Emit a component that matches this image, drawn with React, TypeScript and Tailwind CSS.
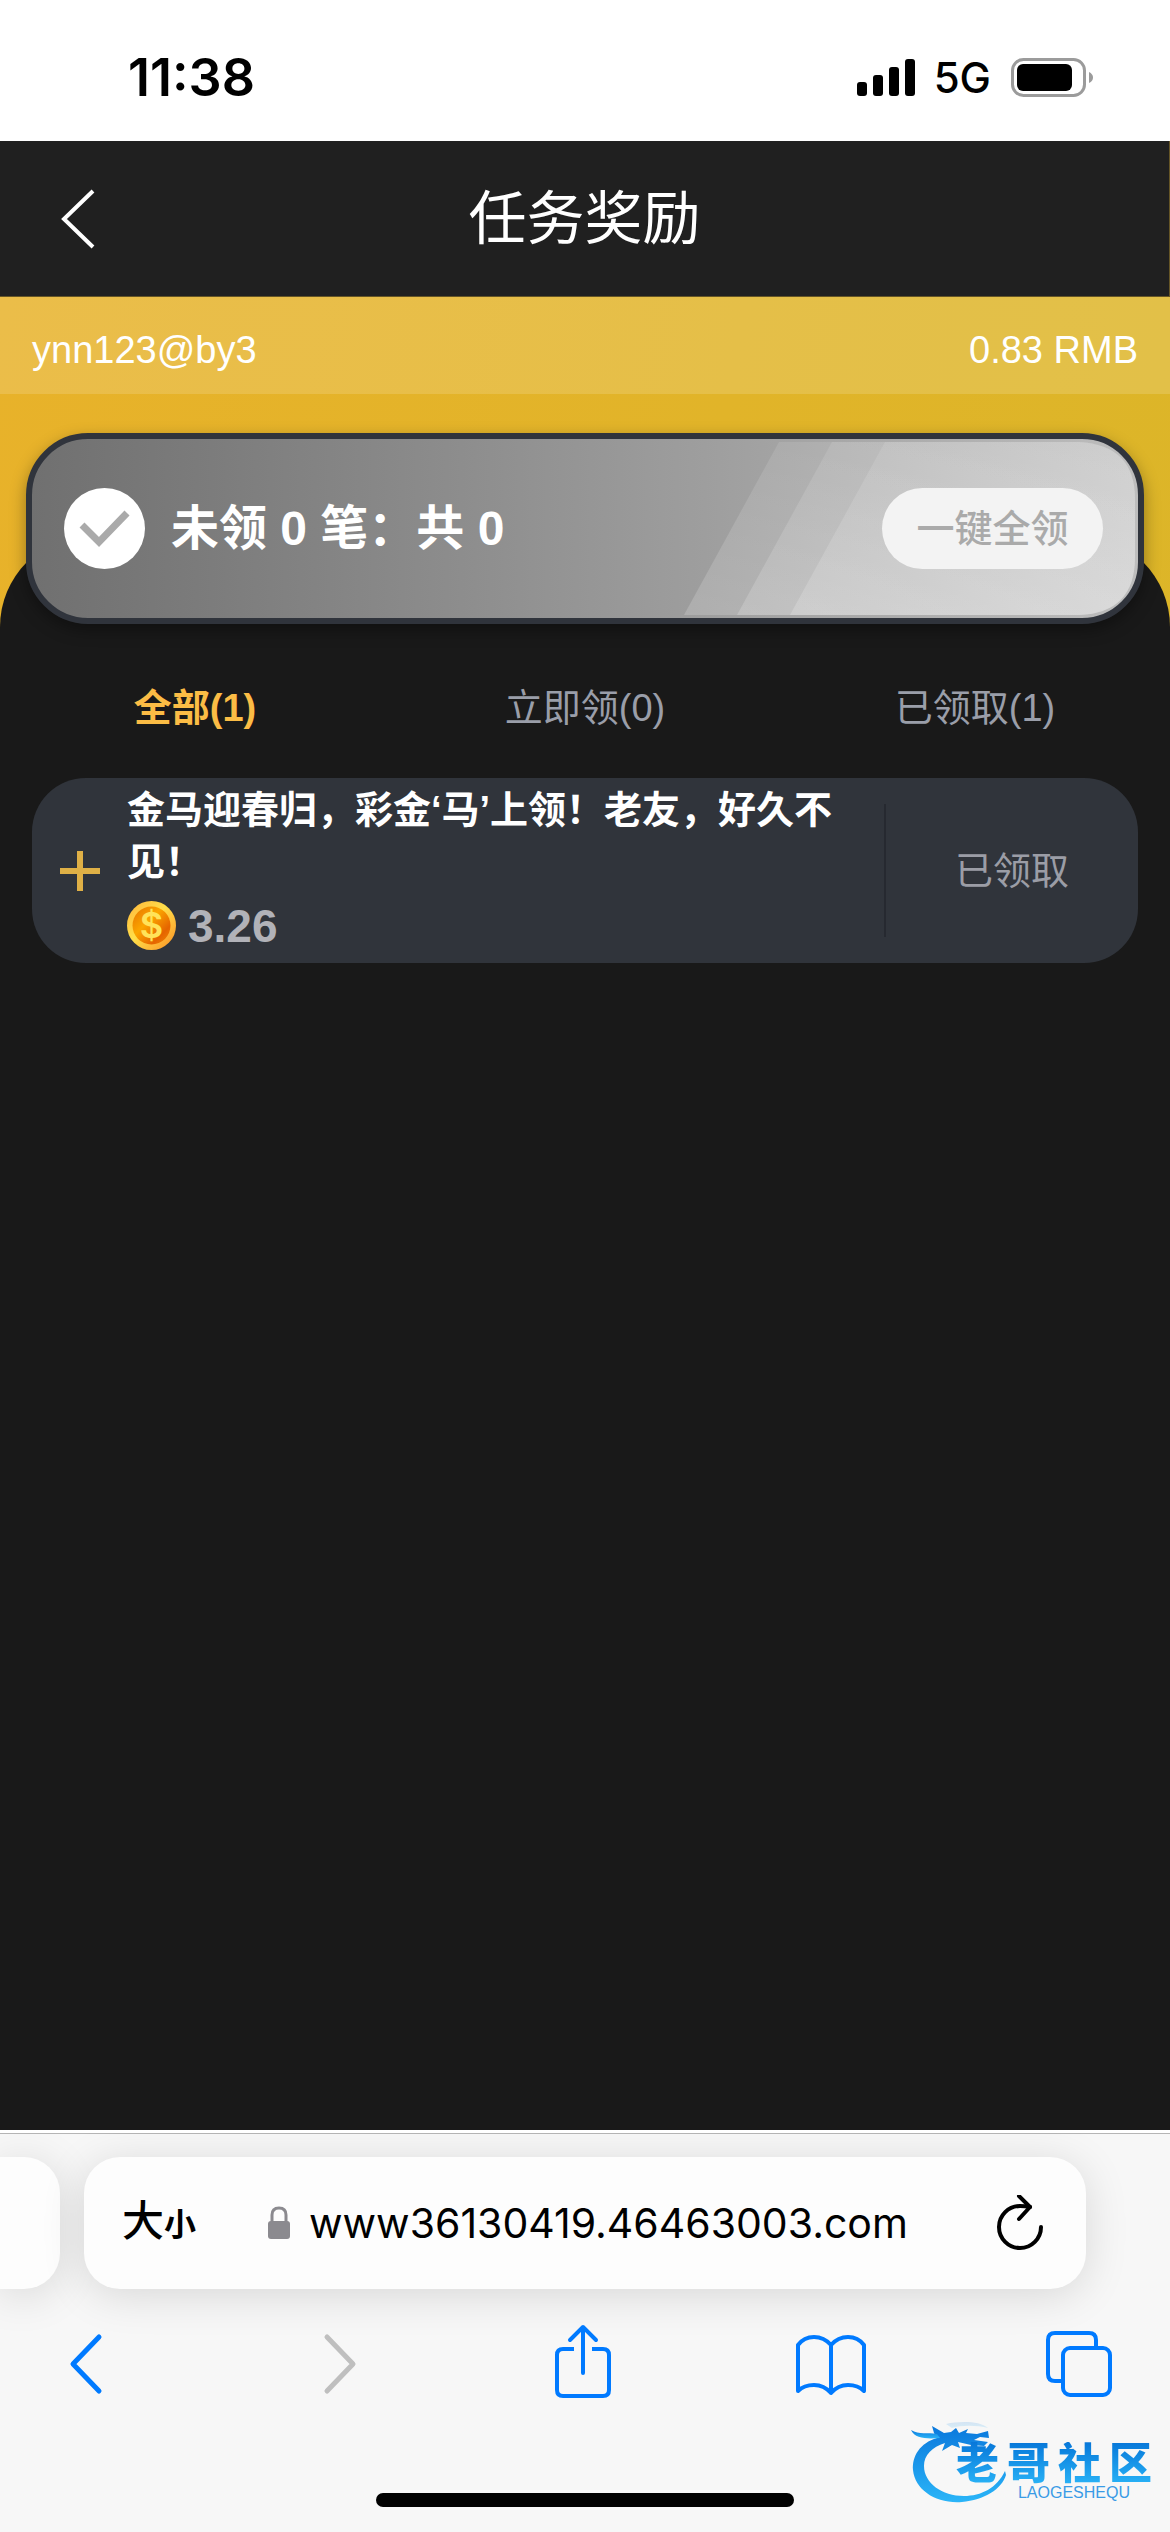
import React from 'react';

const tabs = [
  { id: 'all', label: '全部(1)' },
  { id: 'ready', label: '立即领(0)' },
  { id: 'claimed', label: '已领取(1)' },
];

const rewards = [
  { id: 1, title: '金马迎春归，彩金‘马’上领！老友，好久不见！', amount: '3.26', status: '已领取' },
];

function StatusBar() {
  return (
    <div className="flex h-[141px] items-center justify-between bg-white pl-[128px] pr-[76px] pt-[15px] font-['Inter',sans-serif] text-black">
      <span className="text-[52px] font-semibold leading-[56px]">11:38</span>
      <div className="flex items-center">
        <svg className="h-[38px] w-[58px]" viewBox="0 0 58 38" aria-hidden="true">
          <rect x="0" y="23" width="10" height="14" rx="3" />
          <rect x="16" y="16" width="10" height="21" rx="3" />
          <rect x="32" y="8" width="10" height="29" rx="3" />
          <rect x="48" y="0" width="10" height="37" rx="3" />
        </svg>
        <span className="ml-[19px] text-[42px] font-medium leading-[48px]">5G</span>
        <svg className="ml-5 h-[40px] w-[83px]" viewBox="0 0 83 40" aria-hidden="true">
          <rect x="1.5" y="1.5" width="72" height="36" rx="11" fill="none" stroke="#9b9b9b" strokeWidth="3" />
          <rect x="6" y="6" width="55" height="27" rx="6" />
          <path d="M78 14 Q82 16 82 19.500 Q82 23 78 25 Z" fill="#9b9b9b" />
        </svg>
      </div>
    </div>
  );
}

function Header() {
  return (
    <header className="grid h-[156px] grid-cols-[160px_1fr_160px] items-center border-b border-r border-[#655526] bg-[#202020] text-white">
      <button type="button" aria-label="返回" className="flex h-full items-center pl-[60px]">
        <svg className="h-[60px] w-[36px]" viewBox="0 0 36 60" fill="none" stroke="currentColor" strokeWidth="4" aria-hidden="true">
          <path d="M33 2 L4 30 L33 58" />
        </svg>
      </button>
      <h1 className="text-center text-[58px] font-normal leading-[64px]">任务奖励</h1>
    </header>
  );
}

function ClaimCard() {
  return (
    <section className="relative z-10 mx-[26px] mt-[39px] flex h-[191px] items-center overflow-hidden rounded-[62px] border-[6px] border-[#30343c] bg-linear-to-r from-[#707070] to-[#bdbdbd] pl-[32px] pr-[35px] shadow-[0_6px_16px_rgba(0,0,0,0.35)]">
      {/* Slanted light bands */}
      <svg className="absolute inset-y-0 right-0 h-full w-[454px]" viewBox="0 0 454 179" preserveAspectRatio="none" aria-hidden="true">
        <defs>
          <linearGradient id="band" x1="0" y1="0" x2="0" y2="1">
            <stop offset="0" stopColor="#fff" stopOpacity="0.1" />
            <stop offset="1" stopColor="#fff" stopOpacity="0.18" />
          </linearGradient>
        </defs>
        <path d="M95 3 H395 Q451 6 451 60 V118 Q451 174 395 176 H0 Z" fill="url(#band)" />
        <path d="M148 3 H395 Q451 6 451 60 V118 Q451 174 395 176 H53 Z" fill="url(#band)" />
        <path d="M201 3 H395 Q451 6 451 60 V118 Q451 174 395 176 H106 Z" fill="url(#band)" />
      </svg>
      <svg className="size-[81px] shrink-0" viewBox="0 0 81 81" fill="none" aria-hidden="true">
        <circle cx="40.500" cy="40.500" r="40.500" fill="#fff" />
        <path d="M18 37 L35 54 L63 25" stroke="#aaa" strokeWidth="7" />
      </svg>
      <p className="ml-[26px] text-[48px] font-bold leading-[56px] text-white">未领 0 笔：共 0</p>
      <button type="button" className="relative ml-auto h-[81px] w-[221px] rounded-full bg-[#f3f3f3] text-[38px] font-medium leading-[48px] text-[#aaa]">
        一键全领
      </button>
    </section>
  );
}

function CoinIcon() {
  return (
    <svg className="size-[49px]" viewBox="0 0 49 49" aria-hidden="true">
      <defs>
        <linearGradient id="rim" x1="0" y1="0" x2="1" y2="1">
          <stop offset="0" stopColor="#ffb43a" />
          <stop offset="0.45" stopColor="#ffdf4a" />
          <stop offset="1" stopColor="#fb8d22" />
        </linearGradient>
        <linearGradient id="face" x1="0" y1="0" x2="1" y2="1">
          <stop offset="0" stopColor="#e57200" />
          <stop offset="0.4" stopColor="#fba500" />
          <stop offset="0.75" stopColor="#e56400" />
          <stop offset="1" stopColor="#f08c00" />
        </linearGradient>
      </defs>
      <circle cx="24.500" cy="24.500" r="24.500" fill="url(#rim)" />
      <circle cx="24.500" cy="24.500" r="19" fill="url(#face)" />
      <text x="24.500" y="37" textAnchor="middle" fontFamily="Inter" fontSize="36" fontWeight="600" fill="#ffe35a">$</text>
    </svg>
  );
}

function RewardRow({ title, amount, status }: { title: string; amount: string; status: string }) {
  return (
    <li className="flex h-[185px] items-center rounded-[54px] bg-[#30343b]">
      <button type="button" aria-label="展开" className="flex w-[95px] shrink-0 pl-7 text-[#dfb046]">
        <svg className="size-10" viewBox="0 0 40 40" stroke="currentColor" strokeWidth="6" aria-hidden="true">
          <path d="M20 0 V40 M0 20 H40" />
        </svg>
      </button>
      <div className="min-w-0 flex-1 pb-[6px] pr-8">
        <h2 className="text-[38px] font-bold leading-[52px] text-white">{title}</h2>
        <div className="mt-3 flex items-center gap-3">
          <CoinIcon />
          <span className="text-[46px] font-bold leading-[52px] text-[#b1b2b8]">{amount}</span>
        </div>
      </div>
      <div className="flex h-[133px] w-[254px] shrink-0 items-center justify-center border-l-2 border-[#262930] text-[38px] leading-[48px] text-[#9b9da6]">
        {status}
      </div>
    </li>
  );
}

function BrowserBar() {
  return (
    <footer className="relative mt-auto h-[402px] overflow-hidden border-t-[3px] border-white bg-[#f7f7f7]">
      <div className="flex border-t border-[#b5b5b5] pt-[23px]">
        <div className="h-[132px] w-[60px] rounded-r-[36px] bg-[#fdfdfd] shadow-[0_6px_44px_rgba(0,0,0,0.13)]" />
        <div className="ml-6 mr-[84px] flex h-[132px] flex-1 items-center rounded-[36px] bg-[#fdfdfd] pl-[38px] pr-[42px] text-black shadow-[0_6px_44px_rgba(0,0,0,0.13)]">
          <button type="button" aria-label="大小" className="flex items-baseline leading-[56px]">
            <span className="text-[42px] font-medium">大</span>
            <span className="text-[32px] font-bold">小</span>
          </button>
          <svg className="ml-auto h-[34px] w-[24px] shrink-0" viewBox="0 0 24 34" aria-hidden="true">
            <path d="M5 16 V9 Q5 2 12 2 Q19 2 19 9 V16" fill="none" stroke="#8b8a8f" strokeWidth="3" />
            <rect x="1" y="15" width="22" height="18" rx="3" fill="#8b8a8f" />
          </svg>
          <input
            aria-label="网址"
            readOnly
            value="www36130419.46463003.com"
            className="ml-[18px] w-[616px] bg-transparent font-['Inter',sans-serif] text-[41px] leading-[56px] outline-none"
          />
          <button type="button" aria-label="刷新" className="ml-auto">
            <svg className="h-[56px] w-[48px]" viewBox="0 0 48 56" fill="none" stroke="currentColor" strokeWidth="4" strokeLinecap="round" strokeLinejoin="round" aria-hidden="true">
              <path d="M45 32 A21 21 0 1 1 24 11 Q29 11 34 12" />
              <path d="M23 1 L34 12 L23 24" />
            </svg>
          </button>
        </div>
      </div>

      <nav className="mt-[34px] flex items-center justify-between pl-[49px] pr-[54px] text-[#007aff]">
        <button type="button" aria-label="后退" className="flex w-[74px] justify-center">
          <svg className="h-[76px] w-[38px]" viewBox="0 0 38 76" fill="none" stroke="currentColor" strokeWidth="5" strokeLinecap="round" strokeLinejoin="round" aria-hidden="true">
            <path d="M32 14 L6 41 L32 68" />
          </svg>
        </button>
        <button type="button" aria-label="前进" disabled className="flex w-[74px] justify-center pl-3 text-[#bfbfbf]">
          <svg className="h-[76px] w-[38px]" viewBox="0 0 38 76" fill="none" stroke="currentColor" strokeWidth="5" strokeLinecap="round" strokeLinejoin="round" aria-hidden="true">
            <path d="M6 14 L32 41 L6 68" />
          </svg>
        </button>
        <button type="button" aria-label="分享" className="flex w-[74px] justify-center">
          <svg className="h-[76px] w-[60px]" viewBox="0 0 60 76" fill="none" stroke="currentColor" strokeWidth="4" strokeLinejoin="round" aria-hidden="true">
            <path d="M21 26 H10 Q4 26 4 32 V67 Q4 73 10 73 H50 Q56 73 56 67 V32 Q56 26 50 26 H39" />
            <path d="M30 50 V4 M17 17 L30 4 L43 17" strokeLinecap="round" />
          </svg>
        </button>
        <button type="button" aria-label="书签" className="flex w-[74px] justify-center">
          <svg className="h-[76px] w-[74px]" viewBox="0 0 74 76" fill="none" stroke="currentColor" strokeWidth="4" strokeLinecap="round" strokeLinejoin="round" aria-hidden="true">
            <path d="M37 22 Q30 14 20 14 Q10 14 4 22 V68 Q10 62 20 62 Q30 62 37 70 Q44 62 54 62 Q64 62 70 68 V22 Q64 14 54 14 Q44 14 37 22 V70" />
          </svg>
        </button>
        <button type="button" aria-label="标签页" className="flex w-[74px] justify-center">
          <svg className="h-[76px] w-[70px]" viewBox="0 0 70 76" fill="none" stroke="currentColor" strokeWidth="4" strokeLinejoin="round" aria-hidden="true">
            <path d="M17 58 H11 Q4 58 4 51 V17 Q4 10 11 10 H45 Q52 10 52 17 V24" />
            <rect x="19" y="25" width="47" height="47" rx="7" />
          </svg>
        </button>
      </nav>

      <div className="absolute bottom-[25px] left-1/2 h-[14px] w-[418px] -translate-x-1/2 rounded-full bg-black" />
      <Watermark />
    </footer>
  );
}

function Watermark() {
  return (
    <div className="absolute bottom-[28px] right-[18px] h-[84px] w-[244px]">
      <svg className="absolute inset-0 h-full w-full" viewBox="0 0 244 84" aria-hidden="true">
        <defs>
          <linearGradient id="dragon" x1="0" y1="0" x2="0" y2="1">
            <stop offset="0" stopColor="#0a78dc" />
            <stop offset="1" stopColor="#2bb5f8" />
          </linearGradient>
        </defs>
        <g fill="url(#dragon)">
          <path d="M29 18 C12 23 4 36 5 50 C7 70 28 84 54 82 C76 80 94 69 98 55 L97 51 C89 68 73 76 56 76 C34 76 16 63 16 46 C16 35 24 27 37 23 L34 31 L44 25 L52 28 L50 22 L63 25 L76 26 L80 22 L66 20 L72 17 L81 18 L80 11 L69 14 L58 13 L60 9 L51 13 L48 8 L43 12 L36 13 L24 6 L26 13 Z" />
          <path d="M3 10 C11 15 20 12 29 14 L32 18 C20 19 7 19 3 10 Z" />
          <path d="M38 4 C52 1 72 1 80 8 C69 5 53 5 44 8 Z" opacity="0.15" />
        </g>
      </svg>
      <div className="absolute right-0 top-[22px] flex gap-2 bg-linear-to-b from-[#0877d9] to-[#2ab4f7] bg-clip-text text-[43px] font-black leading-[44px] text-transparent">
        <span>老</span>
        <span>哥</span>
        <span>社</span>
        <span>区</span>
      </div>
      <span className="absolute right-[22px] top-[65px] text-[16px] leading-[16px] text-[#3a9be6]">LAOGESHEQU</span>
    </div>
  );
}

export default function App() {
  return (
    <div className="flex min-h-screen flex-col bg-[#191919] font-['Liberation_Sans','Noto_Sans_CJK_SC',sans-serif]">
      <StatusBar />
      <Header />
      <div className="flex flex-1 flex-col bg-[linear-gradient(100deg,#e8b22a,#dab628)]">
        <div className="flex h-[97px] items-center justify-between bg-white/15 px-8 pt-2 text-[38px] leading-[48px] text-white">
          <span>ynn123@by3</span>
          <span>0.83 RMB</span>
        </div>
        <ClaimCard />
        <main className="-mt-[89px] flex-1 rounded-t-[92px] bg-[#191919] px-8 pb-8 pt-[149px]">
          <div role="tablist" className="-mx-8 grid grid-cols-3">
            {tabs.map((tab, i) => (
              <button
                key={tab.id}
                type="button"
                role="tab"
                aria-selected={i === 0}
                className={
                  i === 0
                    ? 'text-[38px] font-bold leading-[48px] text-[#fbbc45]'
                    : 'text-[38px] leading-[48px] text-[#9a9ea9]'
                }
              >
                {tab.label}
              </button>
            ))}
          </div>
          <ul className="mt-[46px]">
            {rewards.map((r) => (
              <RewardRow key={r.id} title={r.title} amount={r.amount} status={r.status} />
            ))}
          </ul>
        </main>
      </div>
      <BrowserBar />
    </div>
  );
}
